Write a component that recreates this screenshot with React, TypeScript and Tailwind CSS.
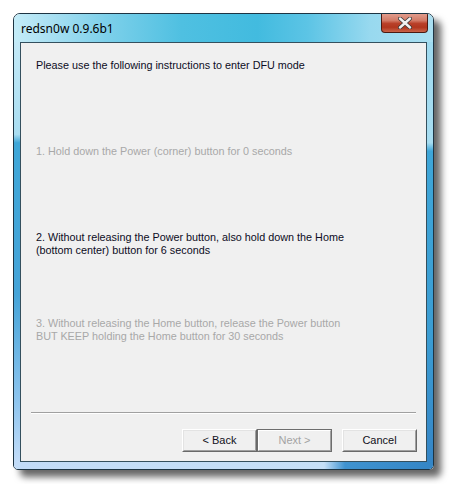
const ui = { fontFamily: '"Liberation Sans", Arial, sans-serif' };

function WinButton({ label, isDefault }: { label: string; isDefault?: boolean }) {
  return (
    <button
      className={
        isDefault
          ? 'w-[75px] h-[23px] border border-[#6d6d6d] bg-[#f0f0f0] p-0'
          : 'w-[75px] h-[23px] border border-t-white border-l-white border-r-[#696969] border-b-[#696969] bg-[#f0f0f0] p-0'
      }
    >
      <div
        className={
          isDefault
            ? 'w-full h-full border border-t-white border-l-white border-r-[#a0a0a0] border-b-[#a0a0a0] flex items-center justify-center text-[11px] text-[#a3a3a3]'
            : 'w-full h-full border border-t-[#e3e3e3] border-l-[#e3e3e3] border-r-[#a0a0a0] border-b-[#a0a0a0] flex items-center justify-center text-[11px] text-[#101020]'
        }
      >
        {label}
      </div>
    </button>
  );
}

export default function App() {
  return (
    <div className="w-[449px] h-[484px] bg-white pt-[13px] pl-[13px]" style={ui}>
      <div className="relative w-[421px] h-[457px] rounded-t-[7px] rounded-b-[5px] border border-[#1d3443] overflow-hidden shadow-[7px_7px_7px_rgba(0,0,0,0.6)] flex flex-col">
        {/* title bar */}
        <div className="h-[28px] flex items-center pl-[7px] bg-[linear-gradient(to_right,#c4ecf8_0%,#a5def1_10%,#7dd0ea_22%,#4fc0e1_40%,#42bbdf_58%,#5cc4e5_70%,#98d9ef_85%,#aadff1_100%)]">
          <span className="text-[12px] text-black pt-[2px]" style={{ fontFamily: '"Noto Sans", "Open Sans", sans-serif' }}>
            redsn0w 0.9.6b1
          </span>
        </div>
        <div className="absolute top-[-1px] right-[5px] w-[47px] h-[20px] rounded-b-[4px] border border-[#4b1a12] border-t-0 bg-[linear-gradient(to_bottom,#e3a192_0%,#d27a66_40%,#b9412a_55%,#b1361e_75%,#c9644a_100%)] flex items-center justify-center">
          <svg width="14" height="12" viewBox="0 0 14 12">
            <path d="M2 1.5 L12 10.5 M12 1.5 L2 10.5" stroke="#3a3a3a" strokeWidth="4" strokeLinecap="round" />
            <path d="M2 1.5 L12 10.5 M12 1.5 L2 10.5" stroke="#f2f2f2" strokeWidth="2.4" strokeLinecap="round" />
          </svg>
        </div>
        {/* body */}
        <div className="flex-1 flex">
          <div className="w-[6px] bg-[linear-gradient(to_bottom,#c3e9f7_0%,#a9ddf1_22%,#3fa7d8_24%,#45a4d8_60%,#8cc4ee_85%,#c2dcf8_100%)]" />
          <div className="flex-1 border border-[#34505e] bg-[#f0f0f0] flex flex-col text-[10.8px] leading-[13px] text-[#0c0c24]">
            <div className="mt-[16px] pl-[15px]">Please use the following instructions to enter DFU mode</div>
            <div className="mt-[73px] pl-[15px] text-[#a8a8a8]">1. Hold down the Power (corner) button for 0 seconds</div>
            <div className="mt-[73px] pl-[15px]">
              2. Without releasing the Power button, also hold down the Home
              <br />
              (bottom center) button for 6 seconds
            </div>
            <div className="mt-[60px] pl-[15px] text-[#a8a8a8]">
              3. Without releasing the Home button, release the Power button
              <br />
              BUT KEEP holding the Home button for 30 seconds
            </div>
            <div className="mt-[69px] mx-[10px] h-[2px] border-t border-t-[#a0a0a0] border-b border-b-white" />
            <div className="mt-[15px] mr-[9px] flex justify-end">
              <WinButton label="< Back" />
              <WinButton label="Next >" isDefault />
              <div className="w-[10px]" />
              <WinButton label="Cancel" />
            </div>
          </div>
          <div className="w-[6px] bg-[linear-gradient(to_bottom,#9fdaef_0%,#a7ddf1_24%,#3ea6d8_26%,#3b9dd3_70%,#3585c6_100%)]" />
        </div>
        <div className="h-[7px] bg-[linear-gradient(to_right,#c2dcf8_0%,#c5e0f8_74%,#3f93d0_79%,#3486c6_100%)]" />
      </div>
    </div>
  );
}
